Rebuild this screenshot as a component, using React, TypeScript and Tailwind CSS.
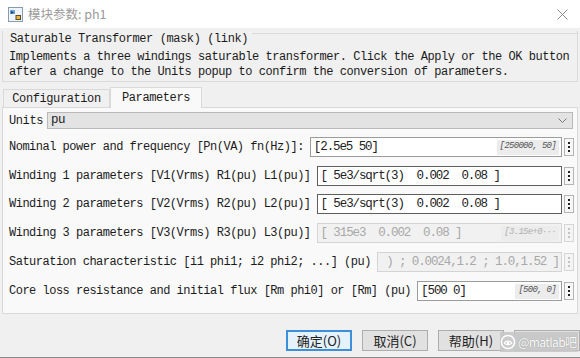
import React from "react";

const mono = "font-['Liberation_Mono',monospace]";
const cjk = "font-['Noto_Sans_CJK_SC','Noto_Sans',sans-serif]";

type Row = {
  label: string;
  value: string;
  hint?: string;
  disabled?: boolean;
  dark?: boolean;
  alignEnd?: boolean;
  mt: string;
};

const rows: Row[] = [
  { label: "Nominal power and frequency [Pn(VA) fn(Hz)]:", value: "[2.5e5 50]", hint: "[250000, 50]", mt: "mt-[8px]" },
  { label: "Winding 1 parameters [V1(Vrms) R1(pu) L1(pu)]", value: "[ 5e3/sqrt(3)  0.002  0.08 ]", dark: true, mt: "mt-[9px]" },
  { label: "Winding 2 parameters [V2(Vrms) R2(pu) L2(pu)]", value: "[ 5e3/sqrt(3)  0.002  0.08 ]", dark: true, mt: "mt-[8px]" },
  { label: "Winding 3 parameters [V3(Vrms) R3(pu) L3(pu)]", value: "[ 315e3  0.002  0.08 ]", hint: "[3.15e+0···", disabled: true, mt: "mt-[9px]" },
  { label: "Saturation characteristic [i1 phi1; i2 phi2; ...] (pu)", value: ") ; 0.0024,1.2 ; 1.0,1.52 ]", disabled: true, alignEnd: true, mt: "mt-[9px]" },
  { label: "Core loss resistance and initial flux [Rm phi0] or [Rm] (pu)", value: "[500 0]", hint: "[500, 0]", mt: "mt-[9px]" },
];

function BlockIcon() {
  return (
    <svg width="15" height="15" viewBox="0 0 15 15">
      <rect x="0.5" y="0.5" width="14" height="14" fill="#eef4fb" stroke="#8a9bb0" />
      <path d="M2 3h5v4H2z" fill="#6fa0d8" />
      <path d="M3 4l3 1.5L3 7z" fill="#1d3f73" />
      <rect x="7.5" y="8" width="5.5" height="5" fill="#5a4a2a" />
      <rect x="8.5" y="9" width="3.5" height="3" fill="#e8b840" />
    </svg>
  );
}

function Dots({ disabled }: { disabled?: boolean }) {
  return (
    <div
      className={`ml-[2px] w-[10px] h-[18px] border flex flex-col items-center justify-center gap-[2px] ${
        disabled ? "border-[#d6d6d6] bg-[#f4f4f4]" : "border-[#b4b4b4] bg-[#f7f7f7]"
      }`}
    >
      <div className={`w-[2px] h-[2px] ${disabled ? "bg-[#c4c4c4]" : "bg-[#222]"}`} />
      <div className={`w-[2px] h-[2px] ${disabled ? "bg-[#c4c4c4]" : "bg-[#222]"}`} />
      <div className={`w-[2px] h-[2px] ${disabled ? "bg-[#c4c4c4]" : "bg-[#222]"}`} />
    </div>
  );
}

function ParamRow({ row }: { row: Row }) {
  const box = row.disabled
    ? "border-[#d4d4d4] bg-[#f1f1f1] text-[#a8a8a8]"
    : row.dark
    ? "border-[#5e5e5e] bg-white text-[#222]"
    : "border-[#9c9c9c] bg-white text-[#222]";
  return (
    <div className={`flex items-center h-[20px] pl-[6px] pr-[3px] ${row.mt}`}>
      <span className="whitespace-pre text-[12px] tracking-[-0.5px] text-[#1b1b1b]">{row.label}</span>
      <div
        className={`ml-[6px] flex-1 min-w-0 h-[20px] flex items-center overflow-hidden border ${box} ${
          row.alignEnd ? "justify-end" : ""
        }`}
      >
        <span
          className={`whitespace-pre text-[12.5px] tracking-[-1.1px] pl-[3px] ${row.alignEnd ? "pr-[2px]" : "flex-1"}`}
        >
          {row.value}
        </span>
        {row.hint && (
          <span
            className={`mr-[2px] h-[15px] px-[3px] flex items-center italic text-[9px] tracking-[-0.7px] bg-[#ececec] whitespace-pre ${
              row.disabled ? "text-[#b0b0b0]" : "text-[#555]"
            }`}
          >
            {row.hint}
          </span>
        )}
      </div>
      <Dots disabled={row.disabled} />
    </div>
  );
}

function Button({ label, primary }: { label?: string; primary?: boolean }) {
  return (
    <div
      className={`w-[66px] h-[21px] shrink-0 flex items-center justify-center text-[13px] ${cjk} ${
        primary
          ? "border-2 border-[#3c8fd8] bg-[#e5f1fb] text-[#222]"
          : "border border-[#adadad] bg-[#e1e1e1] text-[#222]"
      }`}
    >
      {label}
    </div>
  );
}

export default function App() {
  return (
    <div className={`relative w-[580px] h-[358px] overflow-hidden bg-[#f0f0f0] flex flex-col border-b border-[#8a8a8a] ${mono}`}>
      {/* title bar */}
      <div className="h-[28px] shrink-0 bg-white flex items-center pl-[8px] pr-[10px]">
        <BlockIcon />
        <span className={`ml-[5px] text-[12.5px] text-[#9a9a9a] ${cjk}`}>模块参数: ph1</span>
        <div className="flex-1" />
        <svg width="11" height="11" viewBox="0 0 11 11" className="mr-[2px]">
          <path d="M0.5 0.5l10 10M10.5 0.5l-10 10" stroke="#8a8a8a" strokeWidth="1" />
        </svg>
      </div>

      {/* mask group box */}
      <div className="mt-[3px] mx-[2px] border-x border-b border-[#dadada]">
        <div className="flex items-start h-[16px]">
          <span className="pl-[7px] pr-[4px] leading-[16px] whitespace-pre text-[12px] tracking-[-0.4px] text-[#1b1b1b]">
            Saturable Transformer (mask) (link)
          </span>
          <div className="flex-1 mt-[2px] border-t border-[#dadada]" />
        </div>
        <div className="pl-[6px] pt-[3px] pb-[1px] leading-[15px] whitespace-pre text-[12px] tracking-[-0.45px] text-[#1b1b1b]">
          <div>Implements a three windings saturable transformer. Click the Apply or the OK button</div>
          <div>after a change to the Units popup to confirm the conversion of parameters.</div>
        </div>
      </div>

      {/* tabs */}
      <div className="mt-[5px] pl-[3px] flex items-end h-[20px] text-[12px] tracking-[-0.4px] text-[#1b1b1b]">
        <div className="w-[107px] h-[18px] flex items-center justify-center border border-b-0 border-[#d9d9d9] bg-[#f0f0f0]">
          Configuration
        </div>
        <div className="relative z-10 -mb-px w-[92px] h-[21px] flex items-center justify-center border border-b-0 border-[#d9d9d9] bg-[#f9f9f9]">
          Parameters
        </div>
      </div>

      {/* tab panel */}
      <div className="mx-[2px] border border-[#d9d9d9] bg-[#f9f9f9] pt-[4px] pb-[12px] flex flex-col">
        <div className="flex items-center h-[17px] pl-[6px] pr-[4px]">
          <span className="text-[12px] tracking-[-0.4px] text-[#1b1b1b]">Units</span>
          <div className="ml-[4px] flex-1 h-[17px] border border-[#b9b9b9] bg-[#e3e3e3] flex items-center pl-[3px] pr-[5px]">
            <span className="flex-1 text-[12.5px] tracking-[-0.6px] text-[#222]">pu</span>
            <svg width="9" height="6" viewBox="0 0 9 6">
              <path d="M0.5 0.5l4 4 4-4" fill="none" stroke="#7a7a7a" strokeWidth="1" />
            </svg>
          </div>
        </div>
        {rows.map((r) => (
          <ParamRow key={r.label} row={r} />
        ))}
      </div>

      {/* buttons */}
      <div className="mt-[16px] flex justify-end gap-[10px]">
        <Button label="确定(O)" primary />
        <Button label="取消(C)" />
        <Button label="帮助(H)" />
        <Button />
      </div>

      {/* watermark */}
      <div className="absolute left-[500px] top-[332px] h-[20px] flex items-center whitespace-nowrap pr-[2px] bg-[#c6c6c6]/90">
        <svg width="16" height="16" viewBox="0 0 17 17" className="shrink-0">
          <circle cx="8.5" cy="8.5" r="7" fill="none" stroke="#fff" strokeWidth="1.6" />
          <path d="M4.5 9.5c1.5-2.5 6.5-2.5 8 0-1.5 2.5-6.5 2.5-8 0z" fill="none" stroke="#fff" strokeWidth="1.3" />
          <circle cx="8.5" cy="9.5" r="1.3" fill="#fff" />
        </svg>
        <span className={`ml-[2px] whitespace-nowrap text-[12px] tracking-[-0.6px] leading-none text-white [text-shadow:0_0_1px_rgba(0,0,0,0.35)] ${cjk}`}>
          @matlab吧
        </span>
      </div>
    </div>
  );
}
